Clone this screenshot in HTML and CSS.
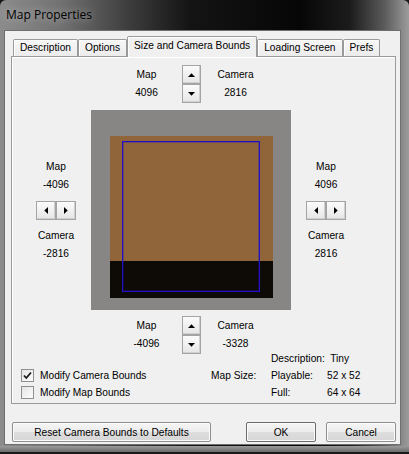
FILE: index.html
```html
<!DOCTYPE html>
<html lang="en">
<head>
  <meta charset="UTF-8">
  <title>Map Properties</title>
  <link rel="stylesheet" href="styles.css">
</head>
<body>
  <div class="window">
    <div class="titlebar">Map Properties</div>

    <div class="client">
      <!-- Tab strip -->
      <div class="tabs">
        <div class="tab">Description</div>
        <div class="tab">Options</div>
        <div class="tab active">Size and Camera Bounds</div>
        <div class="tab">Loading Screen</div>
        <div class="tab">Prefs</div>
      </div>

      <div class="pane">
        <div class="bounds">
          <!-- Top edge -->
          <div class="spin-row top">
            <div class="val">Map<br>4096</div>
            <div class="vspin">
              <div class="arrow-btn"><svg width="7" height="4" viewBox="0 0 7 4"><polygon points="0,4 3.5,0.3 7,4"/></svg></div>
              <div class="arrow-btn"><svg width="7" height="4" viewBox="0 0 7 4"><polygon points="0,0 7,0 3.5,3.7"/></svg></div>
            </div>
            <div class="val">Camera<br>2816</div>
          </div>

          <!-- Left edge -->
          <div class="side left">
            <div class="val">Map<br>-4096</div>
            <div class="hspin">
              <div class="arrow-btn wide"><svg width="4" height="7" viewBox="0 0 4 7"><polygon points="4,0 4,7 0.3,3.5"/></svg></div>
              <div class="arrow-btn wide"><svg width="4" height="7" viewBox="0 0 4 7"><polygon points="0,0 0,7 3.7,3.5"/></svg></div>
            </div>
            <div class="val">Camera<br>-2816</div>
          </div>

          <!-- Preview of map and camera bounds -->
          <div class="preview">
            <div class="map">
              <div class="camera"></div>
            </div>
          </div>

          <!-- Right edge -->
          <div class="side right">
            <div class="val">Map<br>4096</div>
            <div class="hspin">
              <div class="arrow-btn wide"><svg width="4" height="7" viewBox="0 0 4 7"><polygon points="4,0 4,7 0.3,3.5"/></svg></div>
              <div class="arrow-btn wide"><svg width="4" height="7" viewBox="0 0 4 7"><polygon points="0,0 0,7 3.7,3.5"/></svg></div>
            </div>
            <div class="val">Camera<br>2816</div>
          </div>

          <!-- Bottom edge -->
          <div class="spin-row bottom">
            <div class="val">Map<br>-4096</div>
            <div class="vspin">
              <div class="arrow-btn"><svg width="7" height="4" viewBox="0 0 7 4"><polygon points="0,4 3.5,0.3 7,4"/></svg></div>
              <div class="arrow-btn"><svg width="7" height="4" viewBox="0 0 7 4"><polygon points="0,0 7,0 3.5,3.7"/></svg></div>
            </div>
            <div class="val">Camera<br>-3328</div>
          </div>
        </div>

        <div class="footer">
          <div class="info-desc">Description:&nbsp; Tiny</div>
          <label class="check">
            <span class="box"><svg width="11" height="11" viewBox="0 0 11 11"><path d="M2 5.5 L4.3 8 L9 2.5" fill="none" stroke="#1a1a1a" stroke-width="1.8"/></svg></span>
            Modify Camera Bounds
          </label>
          <div>Map Size:</div>
          <div>Playable:</div>
          <div>52 x 52</div>
          <label class="check">
            <span class="box"></span>
            Modify Map Bounds
          </label>
          <div></div>
          <div>Full:</div>
          <div>64 x 64</div>
        </div>
      </div>

      <div class="actions">
        <button class="btn reset">Reset Camera Bounds to Defaults</button>
        <button class="btn ok">OK</button>
        <button class="btn cancel">Cancel</button>
      </div>
    </div>
  </div>
</body>
</html>
```

FILE: styles.css
```css
/* Win7 style dialog */
* {
  box-sizing: border-box;
}

body {
  margin: 0;
  background-color: #161616;
  font-family: "Liberation Sans", Arial, sans-serif;
  font-size: 10.2px;
  color: #000;
}

.window {
  width: 409px;
  height: 454px;
  display: flex;
  flex-direction: column;
  padding: 0 8px 9px 4px;
  border-radius: 6px 6px 0 0;
  background:
    linear-gradient(to bottom, transparent 446px, #9a9a9a 446px, #6c6c6c 452px, #1a1a1a 452px),
    linear-gradient(to right, #8c8c8c 0, #727272 60px, #3c3c3c 130px, #141414 190px, #060606 300px, #1c1c1c 350px, #5c5c5c 385px, #9c9c9c 409px);
}

.titlebar {
  height: 30px;
  line-height: 30px;
  padding-left: 2px;
  font-family: "Open Sans", sans-serif;
  font-size: 12px;
  color: #000;
  text-shadow: 0 0 8px rgba(255,255,255,0.55);
}

.client {
  flex: 1;
  display: flex;
  flex-direction: column;
  padding: 5px 4px 2px 6px;
  background-color: #f0f0f0;
  border: 1px solid #6f6f6f;
}

/* Tabs */
.tabs {
  display: flex;
  align-items: flex-end;
  height: 20px;
  padding-left: 2px;
}

.tab {
  height: 17px;
  line-height: 16px;
  padding: 0 6px;
  border: 1px solid #9a9a9a;
  border-bottom: none;
  border-radius: 2px 2px 0 0;
  background: linear-gradient(#f7f7f7, #ececec);
  box-shadow: inset 1px 1px 0 #fff;
  white-space: nowrap;
}

.tab.active {
  height: 21px;
  line-height: 18px;
  padding: 0 6px;
  margin-bottom: -1px;
  position: relative;
  z-index: 1;
  background: #f0f0f0;
}

.pane {
  height: 348px;
  padding: 8px 0 0 9px;
  border: 1px solid #9a9a9a;
  box-shadow: inset 1px 1px 0 #fff;
  background-color: #f0f0f0;
}

/* Bounds editor */
.bounds {
  display: grid;
  grid-template-columns: 70px 200px 70px;
  grid-template-rows: 39px 200px 38px;
  row-gap: 6px;
}

.spin-row {
  grid-column: 2;
  display: flex;
  justify-content: center;
  align-items: center;
  gap: 10px;
}

.spin-row.top {
  grid-row: 1;
  align-self: start;
  height: 38px;
}

.spin-row.bottom {
  grid-row: 3;
}

.spin-row .val {
  width: 50px;
}

.val {
  text-align: center;
  line-height: 18px;
  white-space: nowrap;
}

.side {
  grid-row: 2;
  display: flex;
  flex-direction: column;
  align-items: center;
  justify-content: center;
  gap: 7px;
}

.side.left {
  grid-column: 1;
}

.side.right {
  grid-column: 3;
}

.vspin {
  display: flex;
  flex-direction: column;
}

.hspin {
  display: flex;
}

.arrow-btn {
  width: 19px;
  height: 19px;
  display: flex;
  align-items: center;
  justify-content: center;
  border: 1px solid #a4a4a4;
  background: linear-gradient(#fbfbfb, #e6e6e6);
  box-shadow: inset -1px -1px 0 #d0d0d0;
}

.arrow-btn.wide {
  width: 20px;
}

.arrow-btn svg {
  fill: #000;
  display: block;
}

.preview {
  grid-column: 2;
  grid-row: 2;
  background-color: #878685;
  padding: 26px 0 0 19px;
}

.map {
  width: 163px;
  height: 162px;
  padding: 5px 0 0 12px;
  background: linear-gradient(#8f6539 125px, #0e0a06 125px);
}

.camera {
  width: 138px;
  height: 151px;
  border: 1px solid #2211c4;
  box-shadow: inset 0 0 0 1px rgba(34,17,196,0.35);
}

/* Footer with options and size info */
.footer {
  display: grid;
  grid-template-columns: 190px 60px 56px auto;
  grid-auto-rows: 17px;
  line-height: 17px;
  margin-top: -4px;
}

.info-desc {
  grid-column: 3 / 5;
  white-space: nowrap;
}

.check {
  display: flex;
  align-items: center;
  gap: 6px;
  white-space: nowrap;
}

.box {
  width: 13px;
  height: 13px;
  display: flex;
  align-items: center;
  justify-content: center;
  border: 1px solid #8e8f8f;
  background: linear-gradient(135deg, #e4e4e4, #fdfdfd);
}

/* Dialog buttons */
.actions {
  display: flex;
  margin-top: 18px;
  height: 20px;
}

.btn {
  height: 20px;
  padding: 0;
  font-family: inherit;
  font-size: inherit;
  color: #000;
  border: 1px solid #8f8f8f;
  border-radius: 2px;
  background: linear-gradient(#f5f5f5 0%, #ececec 50%, #dedede 51%, #d6d6d6 100%);
  box-shadow: inset 0 0 0 1px #fbfbfb;
}

.btn.reset {
  width: 199px;
  margin-left: 1px;
}

.btn.ok {
  width: 70px;
  margin-left: auto;
  border-color: #6b6b6b;
}

.btn.cancel {
  width: 70px;
  margin-left: 10px;
}
```
